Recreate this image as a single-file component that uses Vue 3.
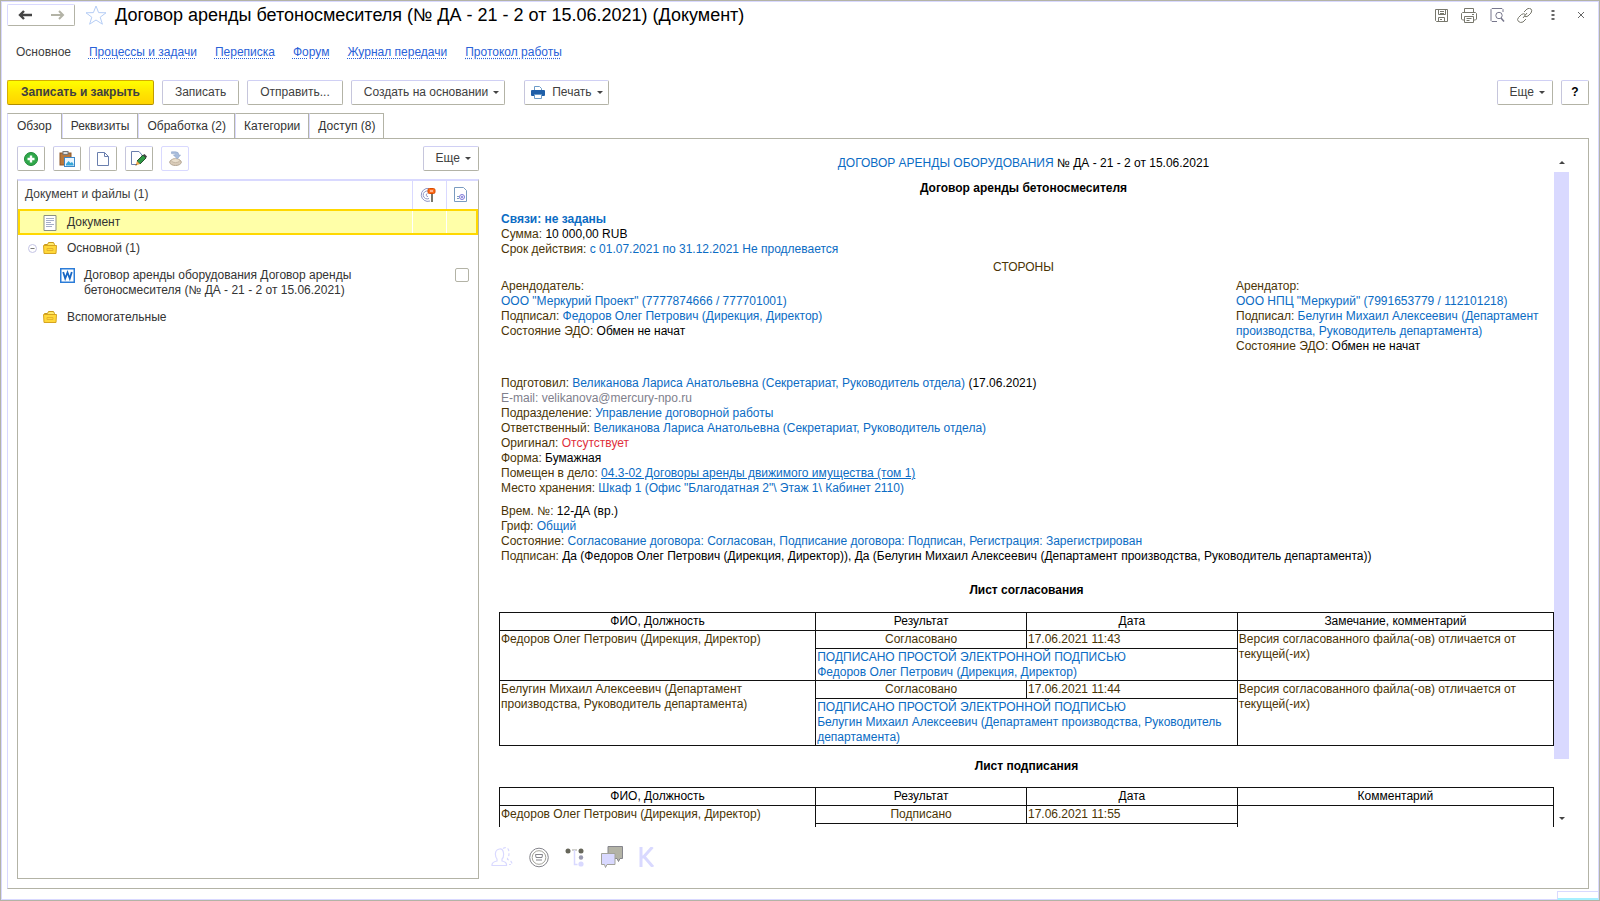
<script setup>
import { ref } from 'vue'

const sections = ['Процессы и задачи', 'Переписка', 'Форум', 'Журнал передачи', 'Протокол работы']
const tabs = ['Обзор', 'Реквизиты', 'Обработка (2)', 'Категории', 'Доступ (8)']
const activeTab = ref(0)
const fileMarked = ref(false)

const approvals = [
  {
    name: 'Федоров Олег Петрович (Дирекция, Директор)',
    date: '17.06.2021 11:43',
    sign: 'Федоров Олег Петрович (Дирекция, Директор)',
  },
  {
    name: 'Белугин Михаил Алексеевич (Департамент производства, Руководитель департамента)',
    date: '17.06.2021 11:44',
    sign: 'Белугин Михаил Алексеевич (Департамент производства, Руководитель департамента)',
  },
]
</script>

<template>
  <div class="window">
    <header class="titlebar">
      <div class="history">
        <button type="button" aria-label="Назад">
          <svg width="14" height="10" viewBox="0 0 14 10"><path d="M6 1 2 5l4 4M2 5h12" fill="none" stroke="#444" stroke-width="2.400" /></svg>
        </button>
        <button type="button" aria-label="Вперед">
          <svg width="14" height="10" viewBox="0 0 14 10"><path d="m8 1 4 4-4 4M12 5H0" fill="none" stroke="#b3b3a6" stroke-width="2" /></svg>
        </button>
      </div>
      <button type="button" class="bare star" aria-label="Избранное">
        <svg width="22" height="20" viewBox="0 0 22 20"><path d="m11 1 2.600 6.600 7.400.2-5.800 4.400 2.200 7L11 15l-6.400 4.200 2.200-7L1 7.800l7.400-.2z" fill="#fff" stroke="#b5cdf5" /></svg>
      </button>
      <h1>Договор аренды бетоносмесителя (№ ДА - 21 - 2 от 15.06.2021) (Документ)</h1>
      <div class="window-tools">
        <button type="button" class="bare" aria-label="Сохранить">
          <svg width="15" height="15" viewBox="0 0 15 15" fill="none" stroke="#77776c"><path d="M1.500 1.500h12v12h-11l-1-1z" /><path d="M4.500 1.500v5h7v-5M6 3.500h4M6 5.500h4M4.500 13.500v-4h6v4M6 11.500h2" /></svg>
        </button>
        <button type="button" class="bare" aria-label="Печать формы">
          <svg width="16" height="15" viewBox="0 0 16 15" fill="none" stroke="#77776c"><path d="M3.500 4V.5h9V4M3.500 12h-2l-1-1V5.500l1-1h13l1 1V11l-1 1h-2M3.500 8.500h9v6h-9zM5.500 10.500h5M5.500 12.500h3M11 6.500h2" /></svg>
        </button>
        <button type="button" class="bare" aria-label="Просмотр">
          <svg width="15" height="15" viewBox="0 0 15 15" fill="none" stroke="#77778c"><path d="M7 13.500H2l-1-1V1.500l1-1h10l1 1V4" /><circle cx="9" cy="7.500" r="3.200" /><path d="m11 10 3 3.500" stroke-width="1.500" /></svg>
        </button>
        <button type="button" class="bare" aria-label="Ссылка">
          <svg width="16" height="15" viewBox="0 0 16 15" fill="none" stroke="#77776c"><path d="m7 4 3-3q2.500-1.500 4 0t0 4l-3 3q-2 1.500-4 0M9 11l-3 3q-2.500 1.200-4.500-.5t0-4l3-3q2-1.500 4 0M6 10l4-5" /></svg>
        </button>
        <button type="button" class="bare" aria-label="Меню">
          <svg width="4" height="12" viewBox="0 0 4 12" fill="#666"><path d="M.5 1h3v2h-3zM.5 5h3v2h-3zM.5 9h3v2h-3z" /></svg>
        </button>
        <button type="button" class="bare" aria-label="Закрыть">
          <svg width="8" height="8" viewBox="0 0 8 8"><path d="m1 1 6 6M7 1 1 7" stroke="#666" /></svg>
        </button>
      </div>
    </header>

    <nav class="sections">
      <span>Основное</span>
      <a v-for="s in sections" :key="s" href="#">{{ s }}</a>
    </nav>

    <div class="commands">
      <button type="button" class="btn primary">Записать и закрыть</button>
      <button type="button" class="btn">Записать</button>
      <button type="button" class="btn">Отправить...</button>
      <button type="button" class="btn drop">Создать на основании<i class="caret"></i></button>
      <button type="button" class="btn drop print">
        <svg width="14" height="13" viewBox="0 0 14 13"><path d="M3.500 4V.5h5l2 2V4" fill="#fff" stroke="#6b9bc8" /><rect y="4" width="14" height="6" rx="1" fill="#1f5fa8" /><path d="M3.500 8.500h7v4h-7z" fill="#fff" stroke="#6b9bc8" /></svg>
        Печать<i class="caret"></i>
      </button>
      <button type="button" class="btn drop more">Еще<i class="caret"></i></button>
      <button type="button" class="btn help">?</button>
    </div>

    <div class="tabs" role="tablist">
      <button
        v-for="(t, i) in tabs"
        :key="t"
        type="button"
        role="tab"
        :aria-selected="activeTab === i"
        :class="{ active: activeTab === i }"
        @click="activeTab = i"
      >{{ t }}</button>
    </div>

    <main class="panel">
      <section class="files">
        <div class="file-tools">
          <button type="button" class="btn icon" aria-label="Добавить">
            <svg width="14" height="14" viewBox="0 0 14 14"><circle cx="7" cy="7" r="6.500" fill="#2fa84a" stroke="#1f8838" /><path d="M7 3.500v7M3.500 7h7" stroke="#fff" stroke-width="2.400" /></svg>
          </button>
          <button type="button" class="btn icon" aria-label="Вставить">
            <svg width="16" height="16" viewBox="0 0 16 16"><rect x="1" y="2" width="11" height="12" fill="#b9783c" stroke="#8d5626" /><rect x="4" y=".5" width="5" height="3" fill="#ddd" stroke="#777" /><rect x="5.500" y="6.500" width="10" height="9" fill="#eaf6ff" stroke="#3c87c8" /><path d="m7 13 2.500-3 2 2 1.500-1 1.500 2v1.500H7z" fill="#36a6d8" /></svg>
          </button>
          <button type="button" class="btn icon" aria-label="Создать">
            <svg width="12" height="14" viewBox="0 0 12 14"><path d="M.5.500h7l4 4v9H.500zM7.500.500v4h4" fill="#fff" stroke="#6a7fae" /></svg>
          </button>
          <button type="button" class="btn icon" aria-label="Изменить">
            <svg width="16" height="15" viewBox="0 0 16 15"><path d="M11 5V4L8 .5H.5v13H5" fill="#fff" stroke="#6a7fae" /><path d="m6 10 6-6 3 3-6 6z" fill="#2f9a45" stroke="#27552f" /><path d="m12 4 1.500-1L16 5.500 15 7z" fill="#444" /><path d="m6 10 3 3-4.500 1.500z" fill="#f0a850" /><path d="m5 13-.5 1.500L6 14z" fill="#222" /></svg>
          </button>
          <button type="button" class="btn icon off" aria-label="Поставить печать">
            <svg width="13" height="15" viewBox="0 0 13 15"><ellipse cx="6.500" cy="11.200" rx="5.800" ry="3.300" fill="#d9cbb8" stroke="#b3a694" /><ellipse cx="6.500" cy="9.600" rx="4" ry="2" fill="#eadfcd" stroke="#c7b9a5" /><path d="M2.500.8h4q3.500 0 3.200 3.200H11.500L8.300 8 4.500 4h2.200Q6.700 2.600 2.500 2.600z" fill="#a9bddb" stroke="#8fa5ca" stroke-width=".6" /></svg>
          </button>
          <button type="button" class="btn drop more">Еще<i class="caret"></i></button>
        </div>
        <div class="tree">
          <table>
            <colgroup><col /><col class="c-sign" /><col class="c-mark" /></colgroup>
            <thead>
              <tr>
                <th>Документ и файлы (1)</th>
                <th class="ico">
                  <svg width="16" height="16" viewBox="0 0 16 16" fill="none" stroke="#8f96c4"><path d="M9 1.500a6.500 6.500 0 1 0 1 12.500M8 4a4 4 0 1 0 1 7.500M7.500 6.500A1.500 1.500 0 1 0 8 9.500" /><rect x="8" y="1.500" width="7" height="5" rx="1.500" fill="#ff6a1a" stroke="#d84d00" /><path d="M10 4h3" stroke="#fff" /><path d="M12 7v8" stroke="#77776c" stroke-width="2" /></svg>
                </th>
                <th class="ico">
                  <svg width="14" height="16" viewBox="0 0 14 16" fill="none" stroke="#7a9cc0"><path d="M.5.5h9l3 3v11H.5z" /><circle cx="8" cy="10" r="2.500" stroke="#7d78d8" /><circle cx="8" cy="10" r=".8" stroke="#7d78d8" /><path d="M3 9.500h2M3 11.500h2" /></svg>
                </th>
              </tr>
            </thead>
            <tbody>
              <tr class="selected">
                <td><div class="node">
                  <svg width="14" height="16" viewBox="0 0 14 16"><path d="M1 .5h12v15H1z" fill="#fff" stroke="#8a8f80" /><path d="M3 3.500h8M3 5.500h8M3 7.500h5M3 9.500h8M3 11.500h6" stroke="#a5aec8" /></svg>
                  <span>Документ</span>
                </div></td>
                <td></td><td></td>
              </tr>
              <tr>
                <td><div class="node">
                  <button type="button" class="bare fold" aria-label="Свернуть">
                    <svg width="9" height="9" viewBox="0 0 9 9"><circle cx="4.500" cy="4.500" r="4" fill="#fff" stroke="#c4c4e4" /><path d="M2.500 4.500h4" stroke="#777" /></svg>
                  </button>
                  <svg width="14" height="12" viewBox="0 0 14 12"><path d="M1.500 4V2.500h3l1-2h5l1 2V4" fill="#ffe96a" stroke="#c99a1c" /><path d="M.5 3.500h13l-.5 8H1z" fill="#ffd83a" stroke="#d6a420" /><path d="M4 6.500h6v2H4z" fill="none" stroke="#e5b52c" /></svg>
                  <span>Основной (1)</span>
                </div></td>
                <td></td><td></td>
              </tr>
              <tr>
                <td><div class="node child">
                  <svg class="word" width="15" height="15" viewBox="0 0 15 15"><rect x=".75" y=".75" width="13.500" height="13.500" fill="#fff" stroke="#2b7cd8" stroke-width="1.500" /><path d="m3.200 4 2 6.500 2.300-6 2.300 6 2-6.500" fill="none" stroke="#1766c4" stroke-width="1.800" /></svg>
                  <label for="file-mark">Договор аренды оборудования Договор аренды бетоносмесителя (№ ДА - 21 - 2 от 15.06.2021)</label>
                </div></td>
                <td></td>
                <td class="mark"><input id="file-mark" v-model="fileMarked" type="checkbox" /></td>
              </tr>
              <tr>
                <td><div class="node">
                  <svg width="14" height="12" viewBox="0 0 14 12"><path d="M1.500 4V2.500h3l1-2h5l1 2V4" fill="#ffe96a" stroke="#c99a1c" /><path d="M.5 3.500h13l-.5 8H1z" fill="#ffd83a" stroke="#d6a420" /><path d="M4 6.500h6v2H4z" fill="none" stroke="#e5b52c" /></svg>
                  <span>Вспомогательные</span>
                </div></td>
                <td></td><td></td>
              </tr>
            </tbody>
          </table>
        </div>
      </section>

      <section class="overview">
        <div class="viewport">
          <article class="doc">
            <p class="center kind"><a href="#">ДОГОВОР АРЕНДЫ ОБОРУДОВАНИЯ</a> <b>№ ДА - 21 - 2 от 15.06.2021</b></p>
            <h2 class="center subject">Договор аренды бетоносмесителя</h2>

            <div class="block terms">
              <p><a href="#" class="strong">Связи: не заданы</a></p>
              <p>Сумма: <b>10 000,00 RUB</b></p>
              <p>Срок действия: <a href="#">с 01.07.2021 по 31.12.2021 Не продлевается</a></p>
            </div>
            <p class="center sides">СТОРОНЫ</p>
            <div class="parties">
              <div class="block">
                <p>Арендодатель:</p>
                <p><a href="#">ООО "Меркурий Проект" (7777874666 / 777701001)</a></p>
                <p>Подписал: <a href="#">Федоров Олег Петрович (Дирекция, Директор)</a></p>
                <p>Состояние ЭДО: <b>Обмен не начат</b></p>
              </div>
              <div class="block">
                <p>Арендатор:</p>
                <p><a href="#">ООО НПЦ "Меркурий" (7991653779 / 112101218)</a></p>
                <p>Подписал: <a href="#">Белугин Михаил Алексеевич (Департамент производства, Руководитель департамента)</a></p>
                <p>Состояние ЭДО: <b>Обмен не начат</b></p>
              </div>
            </div>
            <div class="block details">
              <p>Подготовил: <a href="#">Великанова Лариса Анатольевна (Секретариат, Руководитель отдела)</a> <b>(17.06.2021)</b></p>
              <p class="muted">E-mail: velikanova@mercury-npo.ru</p>
              <p>Подразделение: <a href="#">Управление договорной работы</a></p>
              <p>Ответственный: <a href="#">Великанова Лариса Анатольевна (Секретариат, Руководитель отдела)</a></p>
              <p>Оригинал: <span class="alert">Отсутствует</span></p>
              <p>Форма: <b>Бумажная</b></p>
              <p>Помещен в дело: <a href="#" class="underlined">04.3-02 Договоры аренды движимого имущества (том 1)</a></p>
              <p>Место хранения: <a href="#">Шкаф 1 (Офис "Благодатная 2"\ Этаж 1\ Кабинет 2110)</a></p>
            </div>
            <div class="block">
              <p>Врем. №: <b>12-ДА (вр.)</b></p>
              <p>Гриф: <a href="#">Общий</a></p>
              <p>Состояние: <a href="#">Согласование договора: Согласован, Подписание договора: Подписан, Регистрация: Зарегистрирован</a></p>
              <p>Подписан: <b>Да (Федоров Олег Петрович (Дирекция, Директор)), Да (Белугин Михаил Алексеевич (Департамент производства, Руководитель департамента))</b></p>
            </div>

            <h2 class="sheet-title">Лист согласования</h2>
            <table class="sheet">
              <colgroup><col class="wide" /><col class="narrow" /><col class="narrow" /><col class="wide" /></colgroup>
              <thead>
                <tr><th>ФИО, Должность</th><th>Результат</th><th>Дата</th><th>Замечание, комментарий</th></tr>
              </thead>
              <tbody v-for="a in approvals" :key="a.name">
                <tr>
                  <td rowspan="2">{{ a.name }}</td>
                  <td class="result">Согласовано</td>
                  <td>{{ a.date }}</td>
                  <td rowspan="2">Версия согласованного файла(-ов) отличается от текущей(-их)</td>
                </tr>
                <tr>
                  <td colspan="2" class="sign"><a href="#">ПОДПИСАНО ПРОСТОЙ ЭЛЕКТРОННОЙ ПОДПИСЬЮ<br />{{ a.sign }}</a></td>
                </tr>
              </tbody>
            </table>

            <h2 class="sheet-title second">Лист подписания</h2>
            <table class="sheet">
              <colgroup><col class="wide" /><col class="narrow" /><col class="narrow" /><col class="wide" /></colgroup>
              <thead>
                <tr><th>ФИО, Должность</th><th>Результат</th><th>Дата</th><th>Комментарий</th></tr>
              </thead>
              <tbody>
                <tr>
                  <td rowspan="2">Федоров Олег Петрович (Дирекция, Директор)</td>
                  <td class="result">Подписано</td>
                  <td>17.06.2021 11:55</td>
                  <td rowspan="2"></td>
                </tr>
                <tr><td colspan="2" class="sign"><a href="#">НА БУМАГЕ</a></td></tr>
              </tbody>
            </table>
          </article>
          <div class="scrollbar" aria-hidden="true">
            <i class="caret up"></i>
            <div class="track"><div class="thumb"></div></div>
            <i class="caret"></i>
          </div>
        </div>

        <div class="doc-tools">
          <button type="button" class="bare" aria-label="Участники">
            <svg width="22" height="22" viewBox="0 0 22 22" fill="none" stroke="#d9d9ff" stroke-width="1.200"><path d="M1 19.500q-.5-3.500 5-4.500v-2Q4 10.500 4.500 7T8.500 3t4 4-1.500 6v2q5 1 4.500 4.500z" /><path d="M12 2.500q2-1.500 4-.5t2 5-1.500 5v1.500q4.500 1 4.500 5h-3" stroke-dasharray="3 2" /></svg>
          </button>
          <button type="button" class="bare" aria-label="Печать организации">
            <svg width="20" height="21" viewBox="0 0 20 21" fill="none" stroke="#85858c"><circle cx="10" cy="10.500" r="9.300" /><circle cx="10" cy="10.500" r="6.800" stroke="#a3a39a" /><path d="M6.500 7.500h7l-.5 3H7zM7 13h6" /></svg>
          </button>
          <button type="button" class="bare" aria-label="Структура">
            <svg width="20" height="21" viewBox="0 0 20 21"><circle cx="3" cy="4" r="2.500" fill="#66665a" /><path d="M7 3h5" fill="none" stroke="#a3a39a" /><path d="M9.500 3v14.500h3" fill="none" stroke="#d9d9ff" stroke-width="1.500" /><circle cx="16" cy="4" r="2.500" fill="#66665a" /><circle cx="16" cy="10.500" r="2.200" fill="#9a9ab0" /><circle cx="16" cy="17" r="2.600" fill="#d9d9ff" /></svg>
          </button>
          <button type="button" class="bare" aria-label="Обсуждение">
            <svg width="22" height="22" viewBox="0 0 22 22"><path d="M7 .5h14.500v12H19l-1.500 3-1.500-3H7z" fill="#b3b3a6" stroke="#85858c" /><path d="M.5 7.500H14v11H6l-1.500 3-1-3h-3z" fill="#d9d9ff" stroke="#a3a39a" /></svg>
          </button>
          <button type="button" class="bare" aria-label="Контроль">
            <svg width="16" height="20" viewBox="0 0 16 20" fill="none" stroke="#d9d9ff" stroke-width="3"><path d="M2 0v20M13.500 0 5 9.500 14 20M2 10h3" /></svg>
          </button>
        </div>
      </section>
    </main>
    <div class="corner" aria-hidden="true"></div>
  </div>
</template>

<style>
body {
  background: #fff;
}
</style>

<style scoped>
* {
  box-sizing: border-box;
}
.window {
  position: relative;
  display: flex;
  flex-direction: column;
  height: 100vh;
  padding: 2px 10px 11px 6px;
  border: 1px solid #b3b3a6;
  box-shadow: inset 0 0 0 1px #d9d9ff;
  font: 12px/15px "Liberation Sans", Arial, sans-serif;
  color: #404040;
  background: #fff;
}
button {
  font: inherit;
  color: inherit;
  padding: 0;
  background: #fff;
}
svg {
  display: block;
  flex: none;
}
h1, h2, p {
  margin: 0;
}
.bare {
  border: 0;
  background: none;
}
.titlebar {
  display: flex;
  align-items: center;
  height: 24px;
}
.history {
  display: flex;
  width: 68px;
  height: 22px;
  border: 1px solid #b3b3a6;
  border-top-color: #d9d9ff;
  border-left-color: #d9d9ff;
  border-radius: 2px;
}
.history button {
  flex: 1;
  display: flex;
  align-items: center;
  justify-content: center;
  border: 0;
}
.star {
  margin: 0 8px 0 10px;
}
h1 {
  font-size: 18px;
  line-height: 22px;
  font-weight: 400;
  color: #000;
}
.window-tools {
  display: flex;
  align-items: center;
  gap: 12px;
  margin-left: auto;
}
.window-tools button {
  display: flex;
  justify-content: center;
  width: 16px;
}
.sections {
  display: flex;
  gap: 18px;
  padding: 18px 9px 0;
}
.sections a {
  color: #2a62d8;
  text-decoration: underline dotted;
  text-underline-offset: 2px;
}
.commands {
  display: flex;
  gap: 8px;
  margin-top: 20px;
}
.btn {
  display: flex;
  align-items: center;
  justify-content: center;
  height: 25px;
  padding: 0 12px;
  border: 1px solid #b3b3a6;
  border-top-color: #d0d0f4;
  border-left-color: #c6c6dc;
  border-radius: 2px;
}
.btn.primary {
  padding: 0 13px;
  font-weight: 700;
  border-color: #d6ae00 #c09c00 #b08e00 #d6ae00;
  background: linear-gradient(#ffff00, #ffe600 50%, #ffd400);
}
.btn.drop {
  padding-right: 5px;
}
.btn.print {
  margin-left: 11px;
  padding-left: 6px;
}
.btn.print svg {
  margin-right: 7px;
}
.btn.more {
  margin-left: auto;
  padding-right: 7px;
}
.btn.help {
  width: 28px;
  padding: 0;
  font-weight: 700;
  color: #000;
}
.caret {
  border: 3px solid transparent;
  border-top-color: #444;
  border-bottom: 0;
  margin-left: 5px;
}
.tabs {
  display: flex;
  margin-top: 8px;
}
.tabs button {
  height: 25px;
  padding: 0 8px;
  border: 1px solid #b3b3a6;
  border-left-color: #d9d9ff;
  border-bottom: 0;
  color: #333;
}
.tabs .active {
  position: relative;
  height: 26px;
  margin-bottom: -1px;
  padding: 0 9px 1px;
}
.panel {
  flex: 1;
  min-height: 0;
  display: flex;
  gap: 20px;
  padding: 7px 19px 9px 9px;
  border: 1px solid #b3b3a6;
  border-left-color: #d9d9ff;
}
.files {
  width: 462px;
  flex: none;
  display: flex;
  flex-direction: column;
}
.file-tools {
  display: flex;
  gap: 8px;
}
.btn.icon {
  width: 28px;
  padding: 0;
}
.btn.off {
  border-color: #d9d9ff;
}
.tree {
  flex: 1;
  margin-top: 8px;
  border: 1px solid #b3b3a6;
  border-top: 2px solid #d9d9ff;
}
.tree table {
  width: 100%;
  border-collapse: collapse;
  table-layout: fixed;
}
.c-sign {
  width: 34px;
}
.c-mark {
  width: 32px;
}
.tree th {
  height: 28px;
  padding: 0 7px;
  font-weight: 400;
  text-align: left;
  border-bottom: 1px solid #d9d9ff;
}
.tree th.ico {
  border-left: 1px solid #d9d9ff;
}
.tree td {
  padding: 6px 0;
}
.tree .selected td {
  padding: 5px 0 4px;
  background: #ffffa8;
}
.tree .selected td + td {
  border-left: 1px solid #fff;
}
.tree .selected {
  outline: 2px solid #ffd800;
  outline-offset: -2px;
}
.node {
  position: relative;
  display: flex;
  align-items: center;
  gap: 10px;
  padding-left: 25px;
  color: #333;
}
.node svg {
  width: 14px;
}
.fold {
  position: absolute;
  left: 10px;
}
.node .fold svg {
  width: 9px;
}
.node.child {
  align-items: flex-start;
  gap: 9px;
  padding-left: 42px;
  padding-right: 48px;
}
.node .word {
  width: 15px;
}
.mark {
  vertical-align: top;
}
.mark input {
  appearance: none;
  display: block;
  width: 14px;
  height: 14px;
  margin: 0 0 0 9px;
  border: 1px solid #b3b3a6;
  border-radius: 2px;
}
.mark input:checked {
  background: #ffd800;
}
.overview {
  flex: 1;
  min-width: 0;
  display: flex;
  flex-direction: column;
}
.viewport {
  flex: 1;
  min-height: 0;
  display: flex;
}
.doc {
  flex: 1;
  min-width: 0;
  overflow: hidden;
  padding-top: 10px;
  color: #4a3405;
}
.doc a {
  color: #0b6cc4;
  text-decoration: none;
}
.doc .underlined {
  text-decoration: underline;
}
.doc b {
  font-weight: 400;
  color: #000;
}
.doc .strong {
  font-weight: 700;
}
.doc .muted {
  color: #80808c;
}
.doc .alert {
  color: #e0303c;
}
.doc h2 {
  font-size: 12px;
  line-height: 15px;
  text-align: center;
  color: #000;
}
.center {
  padding-right: 6px;
  text-align: center;
}
.block {
  padding-left: 2px;
}
.subject {
  margin-top: 10px;
}
.terms {
  margin-top: 16px;
}
.sides {
  margin-top: 3px;
}
.parties {
  display: grid;
  grid-template-columns: 1fr 320px;
  margin-top: 4px;
}
.details {
  margin: 22px 0 8px;
}
.sheet-title {
  margin: 19px 0 14px;
}
.sheet-title.second {
  margin-top: 13px;
  margin-bottom: 13px;
}
.sheet {
  width: 100%;
  border-collapse: collapse;
  table-layout: fixed;
}
.wide {
  width: 30%;
}
.narrow {
  width: 20%;
}
.sheet th,
.sheet td {
  padding: 1px;
  border: 1px solid #111;
  vertical-align: top;
}
.sheet th {
  font-weight: 400;
  color: #000;
}
.sheet .result {
  text-align: center;
}
.sheet .sign {
  padding-bottom: 0;
}
.scrollbar {
  width: 15px;
  flex: none;
  display: flex;
  flex-direction: column;
  align-items: center;
  padding: 15px 0 7px;
}
.scrollbar .caret {
  margin: 0;
}
.scrollbar .up {
  transform: rotate(180deg);
}
.track {
  flex: 1;
  width: 100%;
  padding-top: 8px;
}
.thumb {
  height: 91%;
  background: #d9d9ff;
}
.doc-tools {
  display: flex;
  align-items: center;
  gap: 16px;
  height: 52px;
  margin-left: -8px;
  padding-top: 8px;
}
.corner {
  position: absolute;
  right: 0;
  bottom: 0;
  width: 42px;
  height: 9px;
  border: 1px solid #d9d9ff;
  border-bottom: 2px solid #a6f0ff;
  background: #fff;
}
</style>
